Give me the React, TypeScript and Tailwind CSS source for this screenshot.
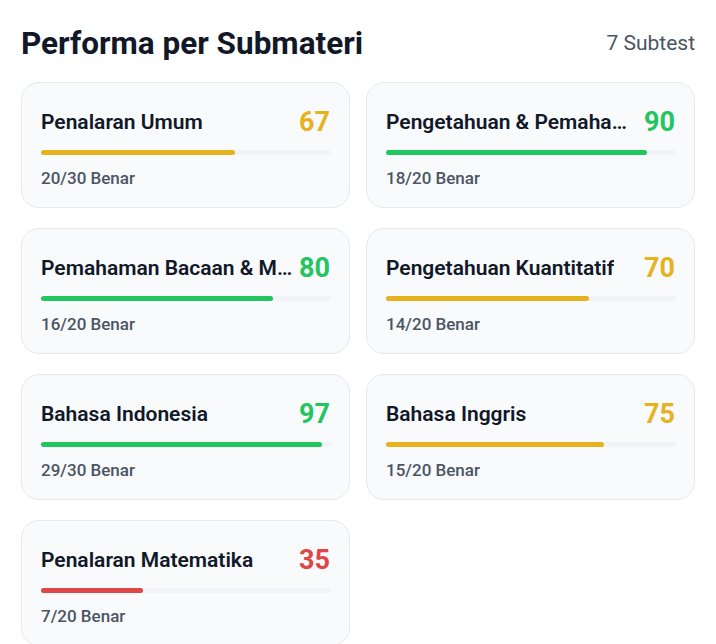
type Submateri = {
  name: string
  correct: number
  total: number
}

const items: Submateri[] = [
  { name: "Penalaran Umum", correct: 20, total: 30 },
  { name: "Pengetahuan & Pemahaman Umum", correct: 18, total: 20 },
  { name: "Pemahaman Bacaan & Menulis", correct: 16, total: 20 },
  { name: "Pengetahuan Kuantitatif", correct: 14, total: 20 },
  { name: "Bahasa Indonesia", correct: 29, total: 30 },
  { name: "Bahasa Inggris", correct: 15, total: 20 },
  { name: "Penalaran Matematika", correct: 7, total: 20 },
]

function tone(score: number) {
  if (score >= 80) return { text: "text-[#22c55e]", bar: "bg-[#22c55e]" }
  if (score >= 60) return { text: "text-[#e6b31e]", bar: "bg-[#e6b31e]" }
  return { text: "text-[#e04646]", bar: "bg-[#e04646]" }
}

function SubmateriCard({ item }: { item: Submateri }) {
  const score = Math.round((item.correct / item.total) * 100)
  const t = tone(score)

  return (
    <div className="rounded-[18px] border border-[#e6e8ec] bg-[#f8fafc] pl-[19px] pr-[18px] pt-[23px] pb-[17px]">
      <div className="flex items-center justify-between gap-1">
        <span className="truncate text-[21px] leading-8 font-semibold text-[#111827]">{item.name}</span>
        <span className={`shrink-0 pr-px text-[27px] leading-8 font-bold ${t.text}`}>{score}</span>
      </div>
      <div className="mt-3 h-[5px] w-full rounded-full bg-[#f1f3f6]">
        <div className={`h-full rounded-full ${t.bar}`} style={{ width: `${score}%` }} />
      </div>
      <div className="mt-[11px] text-[17px] leading-6 font-medium text-[#4b5563]">
        {item.correct}/{item.total} Benar
      </div>
    </div>
  )
}

export default function App() {
  return (
    <div className="min-h-screen bg-white px-[21px] pt-[26px] pb-6 font-['Roboto',sans-serif]">
      <div className="mb-5 flex items-center justify-between">
        <h2 className="text-[31.5px] leading-9 font-bold text-[#111827]">Performa per Submateri</h2>
        <span className="text-[21px] text-[#4b5563]">{items.length} Subtest</span>
      </div>
      <div className="grid grid-cols-2 gap-x-4 gap-y-5">
        {items.map((item) => (
          <SubmateriCard key={item.name} item={item} />
        ))}
      </div>
    </div>
  )
}
